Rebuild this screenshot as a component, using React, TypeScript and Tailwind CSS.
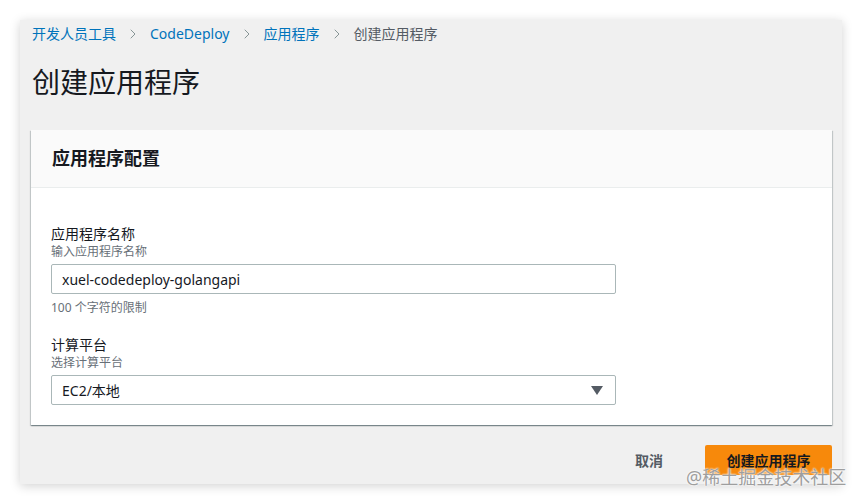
import { ChevronRight } from 'lucide-react';

const font = { fontFamily: '"Noto Sans", "Noto Sans CJK SC", sans-serif' };

function Crumbs() {
  const items = ['开发人员工具', 'CodeDeploy', '应用程序'];
  return (
    <nav className="flex items-center h-5 text-[14px] leading-5">
      {items.map((it) => (
        <span key={it} className="flex items-center">
          <span className="text-[#0073bb]">{it}</span>
          <ChevronRight size={16} strokeWidth={1.5} className="mx-[9px] text-[#879596]" />
        </span>
      ))}
      <span className="text-[#545b64]">创建应用程序</span>
    </nav>
  );
}

function Field({ label, desc, children }: { label: string; desc: string; children: React.ReactNode }) {
  return (
    <div className="flex flex-col">
      <span className="text-[14px] leading-5 text-[#16191f]">{label}</span>
      <span className="text-[12px] leading-4 text-[#687078]">{desc}</span>
      <div className="mt-1">{children}</div>
    </div>
  );
}

export default function App() {
  return (
    <div className="relative w-[862px] h-[504px] bg-white p-5" style={font}>
      <div className="w-[822px] h-[464px] bg-[#f0f0f0] shadow-[0_2px_10px_rgba(0,0,0,0.18)] pl-[11px] pr-[10px] pt-1 flex flex-col">
        <div className="pl-[1px]">
          <Crumbs />
          <h1 className="mt-5 text-[28px] leading-9 font-normal text-[#16191f]">创建应用程序</h1>
        </div>

        <section className="mt-[30px] bg-white shadow-[0_1px_1px_0_rgba(0,28,36,0.3),1px_1px_1px_0_rgba(0,28,36,0.15),-1px_1px_1px_0_rgba(0,28,36,0.15)]">
          <header className="h-[58px] bg-[#fafafa] border-b border-[#eaeded] flex items-center px-[21px]">
            <h2 className="text-[18px] font-bold text-[#16191f]">应用程序配置</h2>
          </header>
          <div className="px-5 pt-[36px] pb-5 flex flex-col">
            <Field label="应用程序名称" desc="输入应用程序名称">
              <div className="w-[565px] h-[30px] border border-[#aab7b8] rounded-[2px] flex items-center px-[10px] text-[14px] text-[#16191f]">
                xuel-codedeploy-golangapi
              </div>
            </Field>
            <span className="mt-[6px] text-[12px] leading-4 text-[#687078]">100 个字符的限制</span>
            <div className="mt-[19px]">
              <Field label="计算平台" desc="选择计算平台">
                <div className="w-[565px] h-[30px] border border-[#aab7b8] rounded-[2px] flex items-center justify-between pl-[10px] pr-[12px] text-[14px] text-[#16191f]">
                  <span>EC2/本地</span>
                  <svg width="12" height="9" viewBox="0 0 12 9">
                    <path d="M0 0h12L6 9z" fill="#545b64" />
                  </svg>
                </div>
              </Field>
            </div>
          </div>
        </section>

        <div className="mt-5 flex items-center justify-end">
          <span className="text-[14px] font-bold text-[#545b64] mr-[42px]">取消</span>
          <div className="w-[127px] h-[30px] rounded-[2px] bg-[#f7890b] flex items-center justify-center text-[14px] font-bold text-[#16191f]">
            创建应用程序
          </div>
        </div>
      </div>

      <div className="absolute left-[686px] top-[465px] text-[18px] leading-6 text-[#9e9e9e] [text-shadow:0_0_2px_#fff,0_0_2px_#fff]">
        @稀土掘金技术社区
      </div>
    </div>
  );
}
